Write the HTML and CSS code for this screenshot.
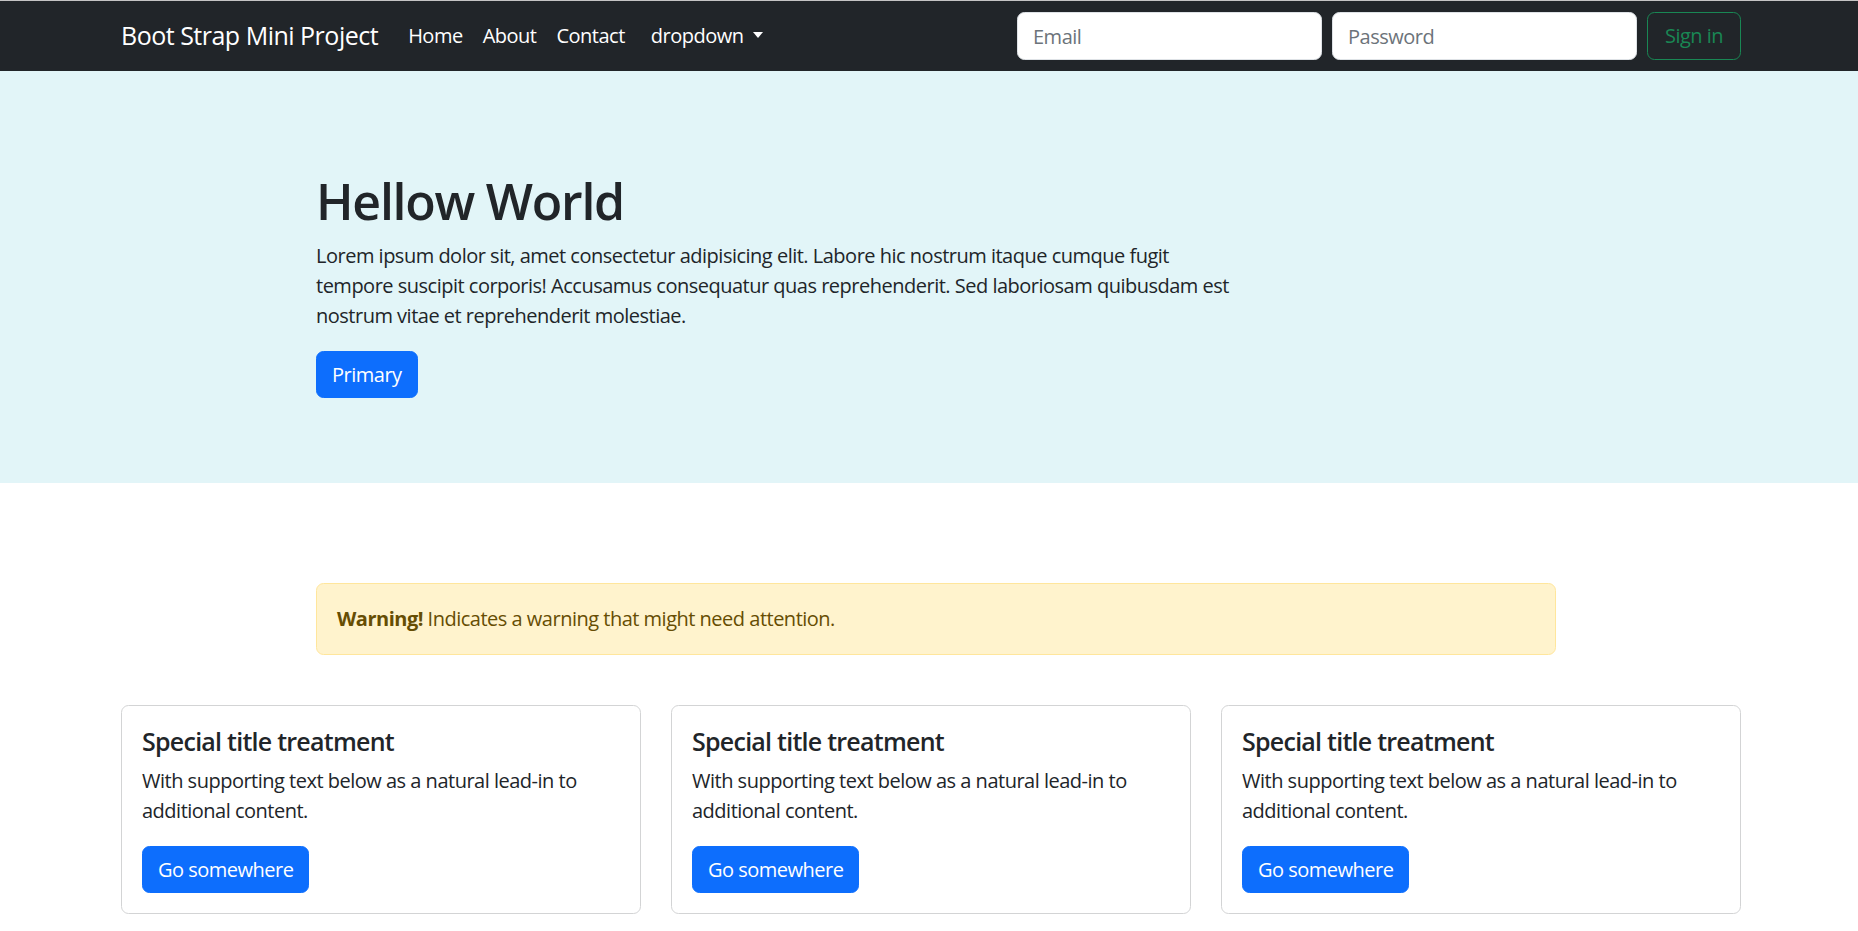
FILE: index.html
```html
<!DOCTYPE html>
<html lang="en">
<head>
<meta charset="utf-8">
<title>Boot Strap Mini Project</title>
<link rel="stylesheet" href="styles.css">
</head>
<body>
<nav class="navbar">
  <div class="container nav-inner">
    <a class="brand" href="#">Boot Strap Mini Project</a>
    <ul class="nav-links">
      <li><a class="nav-link" href="#">Home</a></li>
      <li><a class="nav-link" href="#">About</a></li>
      <li><a class="nav-link" href="#">Contact</a></li>
      <li><button class="dropdown-btn" type="button">dropdown</button></li>
    </ul>
    <form class="nav-form">
      <input class="form-input" type="email" placeholder="Email">
      <input class="form-input" type="password" placeholder="Password">
      <button class="btn-outline-success" type="button">Sign in</button>
    </form>
  </div>
</nav>

<section class="hero">
  <div class="narrow">
    <h1 class="hero-title">Hellow World</h1>
    <p class="hero-text">Lorem ipsum dolor sit, amet consectetur adipisicing elit. Labore hic nostrum itaque cumque fugit tempore suscipit corporis! Accusamus consequatur quas reprehenderit. Sed laboriosam quibusdam est nostrum vitae et reprehenderit molestiae.</p>
    <button class="btn-primary" type="button">Primary</button>
  </div>
</section>

<section class="alert-section">
  <div class="narrow alert-warning"><strong>Warning!</strong> Indicates a warning that might need attention.</div>
</section>

<section class="container cards">
  <div class="card">
    <h5 class="card-title">Special title treatment</h5>
    <p class="card-text">With supporting text below as a natural lead-in to additional content.</p>
    <a class="btn-primary" href="#">Go somewhere</a>
  </div>
  <div class="card">
    <h5 class="card-title">Special title treatment</h5>
    <p class="card-text">With supporting text below as a natural lead-in to additional content.</p>
    <a class="btn-primary" href="#">Go somewhere</a>
  </div>
  <div class="card">
    <h5 class="card-title">Special title treatment</h5>
    <p class="card-text">With supporting text below as a natural lead-in to additional content.</p>
    <a class="btn-primary" href="#">Go somewhere</a>
  </div>
</section>
</body>
</html>
```
FILE: styles.css
```css
* { box-sizing: border-box; }

html, body {
  margin: 0;
  padding: 0;
}

body {
  font-family: "Open Sans", "Noto Sans", Arial, sans-serif;
  font-size: 20px;
  line-height: 30px;
  letter-spacing: -0.025em;
  color: #212529;
  background: #fff;
  border-top: 1px solid #c4c4c4;
}

button, input {
  letter-spacing: -0.025em;
}

.container {
  width: 1620px;
  margin-left: calc(50% - 808px);
}

/* Navbar */
.navbar {
  background: #212529;
  padding: 10px 0;
}

.nav-inner {
  display: flex;
  align-items: center;
  height: 50px;
}

.brand {
  color: #fff;
  text-decoration: none;
  font-size: 25px;
  line-height: 37.5px;
  padding: 6.25px 0;
  margin-right: 20px;
  white-space: nowrap;
}

.nav-links {
  display: flex;
  align-items: center;
  list-style: none;
  margin: 0;
  padding: 0;
}

.nav-link {
  display: block;
  color: #fff;
  text-decoration: none;
  padding: 10px 10px;
}

.dropdown-btn {
  font: inherit;
  color: #fff;
  background: transparent;
  border: 1px solid transparent;
  border-radius: 7.5px;
  padding: 7.5px 15px;
  line-height: 30px;
  cursor: pointer;
}

.dropdown-btn::after {
  content: "";
  display: inline-block;
  margin-left: 9px;
  vertical-align: 5px;
  border-top: 6px solid #fff;
  border-left: 5.5px solid transparent;
  border-right: 5.5px solid transparent;
}

.nav-form {
  display: flex;
  align-items: center;
  margin-left: auto;
  gap: 10px;
}

.form-input {
  width: 305px;
  height: 47.5px;
  font: inherit;
  line-height: 30px;
  padding: 7.5px 15px;
  color: #212529;
  background: #fff;
  border: 1px solid #dee2e6;
  border-radius: 7.5px;
  outline: none;
}

.form-input::placeholder {
  color: #6c737a;
}

.btn-outline-success {
  font: inherit;
  line-height: 30px;
  color: #198754;
  background: transparent;
  border: 1px solid #198754;
  border-radius: 7.5px;
  padding: 7.5px 15px;
  height: 47.5px;
  width: 94px;
}

/* Hero */
.hero {
  background: #e2f5f8;
  padding: 100px 0 85px;
}

.narrow {
  width: 1240px;
  margin-left: calc(50% - 613px);
}

.hero-title {
  font-size: 50px;
  line-height: 60px;
  font-weight: 600;
  letter-spacing: -0.025em;
  margin: 0 0 10px;
}

.hero-text {
  max-width: 915px;
  margin: 0 0 20px;
}

.btn-primary {
  display: inline-block;
  font: inherit;
  line-height: 30px;
  color: #fff;
  background: #0d6efd;
  border: 1px solid #0d6efd;
  border-radius: 7.5px;
  padding: 7.5px 15px;
  text-decoration: none;
}

/* Alert */
.alert-section {
  padding-top: 100px;
}

.alert-warning {
  background: #fff3cd;
  border: 1px solid #ffe69c;
  color: #664d03;
  border-radius: 7.5px;
  padding: 20px;
}

.alert-warning strong {
  font-weight: 700;
}

/* Cards */
.cards {
  display: grid;
  grid-template-columns: repeat(3, 1fr);
  gap: 30px;
  margin-top: 50px;
}

.card {
  border: 1px solid #d3d4d5;
  border-radius: 7.5px;
  padding: 20px;
}

.card-title {
  font-size: 25px;
  line-height: 30px;
  font-weight: 600;
  letter-spacing: -0.03em;
  margin: 0 0 10px;
}

.card-text {
  margin: 0 0 20px;
}
```
